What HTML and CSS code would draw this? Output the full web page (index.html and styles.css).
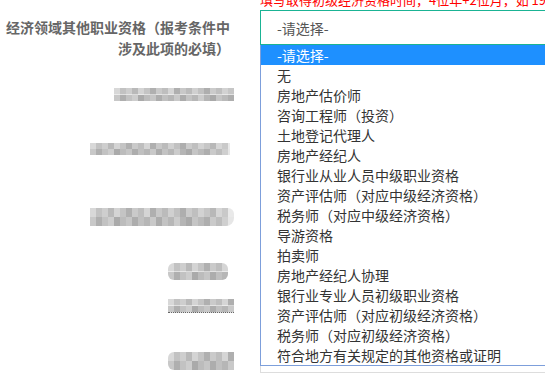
FILE: index.html
```html
<!DOCTYPE html>
<html lang="zh-CN">
<head>
<meta charset="utf-8">
<title>报考信息</title>
<link rel="stylesheet" href="styles.css">
</head>
<body>
<div class="form">
  <div class="labels">
    <div class="label">经济领域其他职业资格（报考条件中<br>涉及此项的必填）</div>
    <div class="blur b1"></div>
    <div class="blur b2"></div>
    <div class="blur b3"></div>
    <div class="blur b4"></div>
    <div class="blur b5"></div>
    <div class="blur b6"></div>
  </div>
  <div class="fields">
    <div class="hint">填写取得初级经济资格时间，4位年+2位月，如 1905</div>
    <div class="select">-请选择-</div>
    <div class="select2">-请选择-</div>
  </div>
  <ul class="dropdown">
    <li class="opt active">-请选择-</li>
    <li class="opt">无</li>
    <li class="opt">房地产估价师</li>
    <li class="opt">咨询工程师（投资）</li>
    <li class="opt">土地登记代理人</li>
    <li class="opt">房地产经纪人</li>
    <li class="opt">银行业从业人员中级职业资格</li>
    <li class="opt">资产评估师（对应中级经济资格）</li>
    <li class="opt">税务师（对应中级经济资格）</li>
    <li class="opt">导游资格</li>
    <li class="opt">拍卖师</li>
    <li class="opt">房地产经纪人协理</li>
    <li class="opt">银行业专业人员初级职业资格</li>
    <li class="opt">资产评估师（对应初级经济资格）</li>
    <li class="opt">税务师（对应初级经济资格）</li>
    <li class="opt">符合地方有关规定的其他资格或证明</li>
  </ul>
</div>
</body>
</html>
```

FILE: styles.css
```css
html, body {
  margin: 0;
  padding: 0;
  overflow: hidden;
  background: #fff;
}

body {
  width: 545px;
  height: 378px;
  font-family: "Noto Sans CJK SC", "Liberation Sans", sans-serif;
}

.form {
  position: relative;
  display: grid;
  grid-template-columns: 234px 320px;
  column-gap: 26px;
}

.labels {
  display: flex;
  flex-direction: column;
  align-items: flex-end;
  padding-top: 17px;
}

.label {
  width: 230px;
  padding-right: 4px;
  text-align: right;
  font-size: 14px;
  line-height: 21px;
  font-weight: bold;
  color: #666;
  white-space: nowrap;
}

.blur {
  background-repeat: no-repeat;
  background-size: 100% 50%, 100% 50%;
  background-position: 0 0, 0 100%;
  background-image:
    linear-gradient(90deg, #d8d8d8 0 6px, #c2c2c2 6px 12px, #cecece 12px 18px, #b9b9b9 18px 24px, #d4d4d4 24px 30px, #c4c4c4 30px 36px, #b0b0b0 36px 42px, #cacaca 42px 48px, #bebebe 48px 54px, #d5d5d5 54px 60px, #afafaf 60px 66px, #c8c8c8 66px 72px, #bbbbbb 72px 78px, #d0d0d0 78px 84px, #c1c1c1 84px 90px, #aeaeae 90px 96px, #cbcbcb 96px 102px, #bfbfbf 102px 108px, #d2d2d2 108px 114px, #c6c6c6 114px 120px, #b8b8b8 120px 126px, #d6d6d6 126px 132px, #c9c9c9 132px 138px, #e9e9e9 138px 144px),
    linear-gradient(90deg, #c8c8c8 0 6px, #afafaf 6px 12px, #c2c2c2 12px 18px, #cdcdcd 18px 24px, #aaaaaa 24px 30px, #bcbcbc 30px 36px, #c6c6c6 36px 42px, #adadad 42px 48px, #c0c0c0 48px 54px, #b6b6b6 54px 60px, #c9c9c9 60px 66px, #acacac 66px 72px, #c3c3c3 72px 78px, #b7b7b7 78px 84px, #cccccc 84px 90px, #b5b5b5 90px 96px, #a9a9a9 96px 102px, #c5c5c5 102px 108px, #bababa 108px 114px, #aeaeae 114px 120px, #cacaca 120px 126px, #bdbdbd 126px 132px, #cfcfcf 132px 138px, #e6e6e6 138px 144px);
}

.b1 { width: 120px; height: 13px; margin-top: 29px; }
.b2 { width: 140px; height: 12px; margin-top: 42px; margin-right: 4px; }
.b3 { width: 144px; height: 18px; margin-top: 53px; border-radius: 0 6px 8px 0; }
.b4 { width: 60px; height: 17px; margin-top: 37px; margin-right: 6px; border-radius: 6px; }
.b5 { width: 66px; height: 13px; margin-top: 19px; border-bottom: 1px dotted #666; }
.b6 { width: 66px; height: 18px; margin-top: 39px; border-radius: 6px 0 0 6px; }

.fields {
  display: flex;
  flex-direction: column;
}

.hint {
  margin-top: -10px;
  height: 20px;
  line-height: 20px;
  font-size: 13px;
  color: #f00;
  white-space: nowrap;
}

.select {
  box-sizing: border-box;
  height: 35px;
  border: 1px solid #1ab394;
  padding: 2px 0 0 16px;
  line-height: 31px;
  font-size: 14px;
  color: #555;
}

.select2 {
  box-sizing: border-box;
  margin-top: 298px;
  height: 30px;
  border: 1px solid #ddd;
  padding-left: 21px;
  line-height: 28px;
  font-size: 14px;
  color: #555;
}

.dropdown {
  position: absolute;
  top: 45px;
  left: 260px;
  width: 320px;
  margin: 0;
  padding: 0;
  list-style: none;
  background: #fff;
  border-left: 1px solid #7d9fdb;
  border-bottom: 1px solid #7d9fdb;
}

.opt {
  height: 20px;
  line-height: 20px;
  padding-left: 16px;
  font-size: 14px;
  color: #333;
  white-space: nowrap;
}

.opt.active {
  background: #1e90ff;
  color: #fff;
}
```
